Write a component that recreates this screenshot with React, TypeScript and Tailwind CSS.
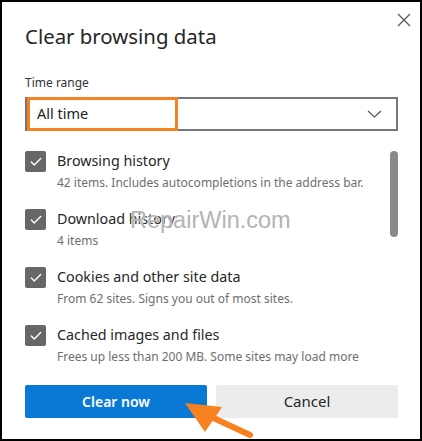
import { Check } from "lucide-react";

const items = [
  { title: "Browsing history", sub: "42 items. Includes autocompletions in the address bar." },
  { title: "Download history", sub: "4 items" },
  { title: "Cookies and other site data", sub: "From 62 sites. Signs you out of most sites." },
  { title: "Cached images and files", sub: "Frees up less than 200 MB. Some sites may load more" },
];

const App = () => {
  return (
    <div
      className="relative w-[422px] h-[441px] bg-white border-2 border-black overflow-hidden"
      style={{ fontFamily: '"Noto Sans", "Open Sans", sans-serif' }}
    >
      {/* close */}
      <svg className="absolute left-[395px] top-[11px]" width="14" height="14" viewBox="0 0 14 14">
        <path d="M1 1 L13 13 M13 1 L1 13" stroke="#5a5a5a" strokeWidth="1.3" fill="none" />
      </svg>

      <div className="pl-[23px] pr-[22px]">
        <h1 className="mt-[20px] text-[20.4px] leading-[28px] text-[#262626]">Clear browsing data</h1>

        <div className="mt-[25px] text-[12px] leading-[16px] text-[#333]">Time range</div>

        <div className="relative mt-[6px] h-[34px] border-2 border-[#777] flex items-center justify-between pl-[10px] pr-[14px]">
          <span className="text-[14.5px] text-[#222]">All time</span>
          <svg width="15" height="8" viewBox="0 0 15 8">
            <path d="M1 1 L7.5 7 L14 1" stroke="#555" strokeWidth="1.2" fill="none" />
          </svg>
          <div className="absolute left-[0px] top-[-2px] w-[151px] h-[34px] border-[3px] border-[#f7811e]" />
        </div>

        <div className="relative mt-[20px] flex flex-col gap-[16px]">
          {items.map((it) => (
            <div key={it.title} className="flex gap-[11px]">
              <div className="w-[21px] h-[21px] rounded-[2px] bg-[#676767] flex items-center justify-center shrink-0">
                <Check className="w-[14px] h-[14px] text-white" strokeWidth={2.4} />
              </div>
              <div className="-mt-[1px]">
                <div className="text-[14.3px] leading-[22px] text-[#262626]">{it.title}</div>
                <div className="text-[12px] leading-[21px] text-[#6e6e6e]">{it.sub}</div>
              </div>
            </div>
          ))}
          <div className="absolute right-[0px] top-[0px] w-[8px] h-[86px] rounded-full bg-[#8a8a8a]" />
        </div>

        <div className="mt-[18px] flex gap-[9px]">
          <button className="w-[182px] h-[33px] bg-[#0a78d5] text-white text-[14px] font-semibold rounded-[2px]">
            Clear now
          </button>
          <button className="w-[182px] h-[33px] bg-[#ececec] text-[#262626] text-[15px] rounded-[2px]">
            Cancel
          </button>
        </div>
      </div>

      {/* watermark */}
      <div
        className="absolute left-[128px] top-[207px] text-[23.5px] leading-none text-[#b4b4b4]"
        style={{ fontFamily: '"Liberation Sans", Arial, sans-serif', textShadow: "0 0 1px #fff" }}
      >
        RepairWin.com
      </div>

      {/* arrow */}
      <svg className="absolute left-[0px] top-[0px]" width="422" height="441" viewBox="0 0 422 441">
        <polygon points="183,401 220,405 203,430" fill="#f7811e" />
        <line x1="205" y1="413" x2="248" y2="433" stroke="#f7811e" strokeWidth="6" strokeLinecap="round" />
      </svg>
    </div>
  );
};

export default App;
